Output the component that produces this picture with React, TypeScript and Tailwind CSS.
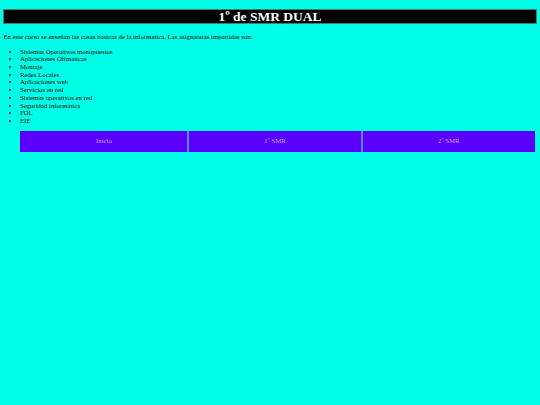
const asignaturas = [
  'Sistemas Operativos monopuestos',
  'Aplicaciones Ofimaticas',
  'Montaje',
  'Redes Locales',
  'Aplicaciones web',
  'Servicios en red',
  'Sistemas operativos en red',
  'Seguridad informatica',
  'FOL',
  'EIE',
]

const enlaces = [
  { label: 'Inicio', width: 'w-[167px]' },
  { label: '1º SMR', width: 'w-[172.5px]' },
  { label: '2º SMR', width: 'w-[172.5px]' },
]

export default function App() {
  return (
    <div className="min-h-screen bg-[#00ffe6] px-[3.4px] pt-[8.7px] text-black font-['Liberation_Serif','Times_New_Roman',serif] text-[6.75px] leading-[7.7px]">
      <h1 className="h-[15.6px] border border-[#3d7f78] bg-black text-center text-[13.5px] font-bold leading-[13.6px] text-white">
        1º de SMR DUAL
      </h1>

      <p className="mt-[9px]">
        En este curso se enseñan las cosas basicas de la informatica. Las asignaturas impartidas son:
      </p>

      <ul className="mt-[6.7px] list-disc pl-[16.6px]">
        {asignaturas.map((a) => (
          <li key={a}>{a}</li>
        ))}
      </ul>

      <nav className="ml-[16.6px] mt-[5.9px] flex w-[515.5px] gap-[1.5px] bg-[#4f8ef7] p-[0.5px]">
        {enlaces.map((e) => (
          <a
            key={e.label}
            href="#"
            className={`${e.width} flex h-[20.5px] items-center justify-center bg-[#5b00ff] text-[#c6a0ff]`}
          >
            {e.label}
          </a>
        ))}
      </nav>
    </div>
  )
}
